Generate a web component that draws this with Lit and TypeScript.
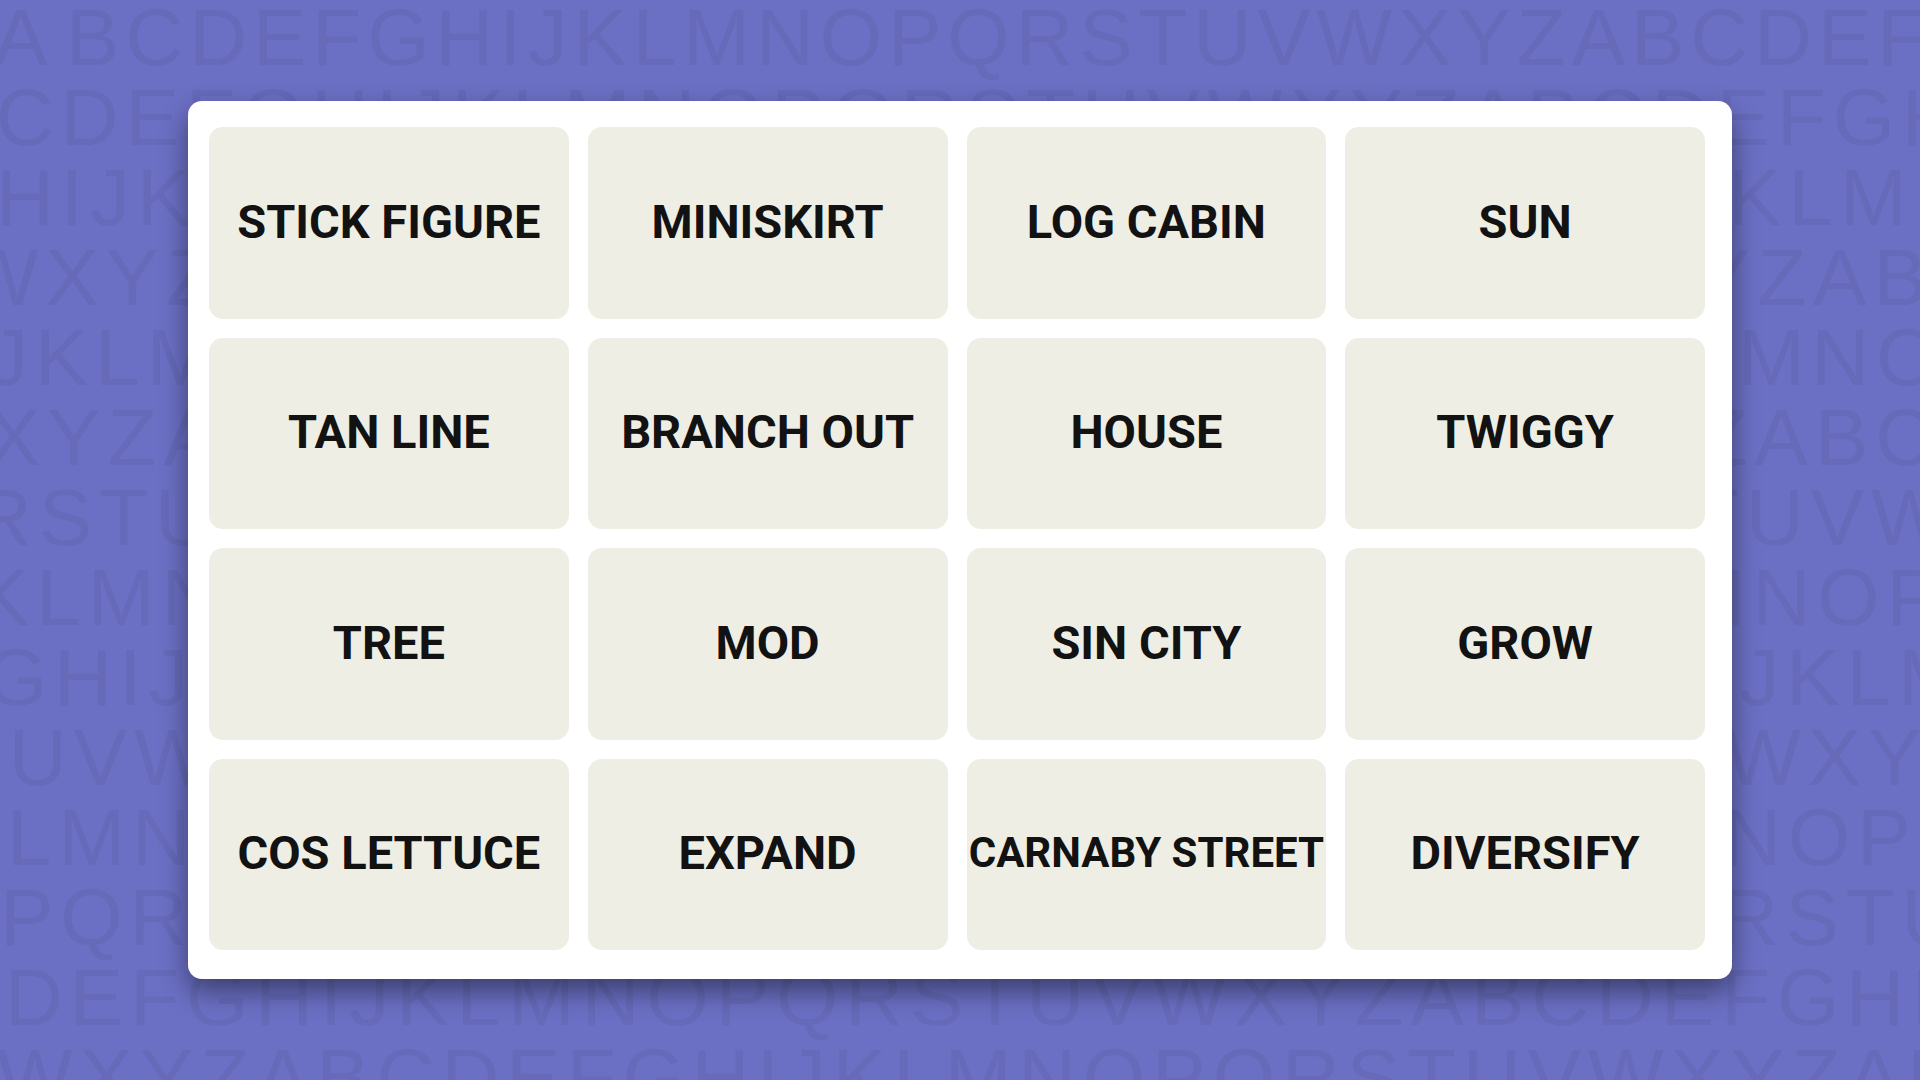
import { LitElement, html, css } from "lit";
import { customElement, state } from "lit/decorators.js";
import { classMap } from "lit/directives/class-map.js";
import { styleMap } from "lit/directives/style-map.js";

const ALPHABET = "ABCDEFGHIJKLMNOPQRSTUVWXYZ";

/** A line of the backdrop: its first letter and how far it starts from the left edge. */
interface Line {
  first: string;
  indent: number;
  tight?: boolean;
}

const LINES: Line[] = [
  { first: "A", indent: -6, tight: true },
  { first: "C", indent: -4 },
  { first: "H", indent: -4 },
  { first: "W", indent: -37 },
  { first: "J", indent: -12 },
  { first: "X", indent: -13 },
  { first: "R", indent: -26 },
  { first: "K", indent: -24 },
  { first: "G", indent: -15 },
  { first: "U", indent: 9 },
  { first: "L", indent: 7 },
  { first: "P", indent: 0 },
  { first: "D", indent: 5 },
  { first: "W", indent: -3 },
];

const WORDS = [
  "STICK FIGURE", "MINISKIRT", "LOG CABIN", "SUN",
  "TAN LINE", "BRANCH OUT", "HOUSE", "TWIGGY",
  "TREE", "MOD", "SIN CITY", "GROW",
  "COS LETTUCE", "EXPAND", "CARNABY STREET", "DIVERSIFY",
];

@customElement("letter-backdrop")
export class LetterBackdrop extends LitElement {
  static styles = css`
    :host {
      display: block;
      overflow: hidden;
      color: #666ab9;
      font-family: "Liberation Sans", Arial, sans-serif;
      font-size: 80px;
      line-height: 80px;
      user-select: none;
    }
    .line {
      white-space: nowrap;
      letter-spacing: 7px;
    }
    .tight {
      letter-spacing: 6px;
    }
  `;

  private text(line: Line) {
    const at = ALPHABET.indexOf(line.first);
    const run = ALPHABET.slice(at) + ALPHABET + ALPHABET;
    return line.tight ? run[0] + "\u200a" + run.slice(1) : run;
  }

  render() {
    return LINES.map(
      (line) => html`<div
        class=${classMap({ line: true, tight: !!line.tight })}
        style=${styleMap({ textIndent: `${line.indent}px` })}
      >${this.text(line)}</div>`
    );
  }
}

@customElement("app-root")
export class AppRoot extends LitElement {
  static styles = css`
    :host {
      display: block;
    }
    .page {
      position: relative;
      box-sizing: border-box;
      display: flex;
      min-height: 100vh;
      padding: 101px 188px;
      overflow: hidden;
      background: #6c70c5;
    }
    .backdrop {
      position: absolute;
      inset: -2px 0 0;
    }
    .board {
      position: relative;
      flex: 1;
      display: grid;
      grid-template-columns: repeat(4, minmax(0, 1fr));
      grid-auto-rows: 1fr;
      gap: 19px;
      padding: 26px 27px 29px 21px;
      border-radius: 14px;
      background: #ffffff;
      box-shadow: 0 12px 28px rgba(0, 0, 0, 0.45);
    }
    .tile {
      display: flex;
      align-items: center;
      justify-content: center;
      margin: 0;
      padding: 0 0 2px;
      border: 0;
      border-radius: 14px;
      background: #eeeee5;
      color: #121212;
      font-family: Roboto, "Liberation Sans", sans-serif;
      font-size: 47px;
      font-weight: 700;
      line-height: 56px;
      white-space: nowrap;
      cursor: pointer;
    }
    .long {
      font-size: 42px;
    }
    .tile[aria-pressed="true"] {
      background: #5a594e;
      color: #ffffff;
    }
  `;

  @state() private chosen: string[] = [];

  private toggle(word: string) {
    this.chosen = this.chosen.includes(word)
      ? this.chosen.filter((w) => w !== word)
      : [...this.chosen, word];
  }

  render() {
    return html`
      <main class="page">
        <letter-backdrop class="backdrop" aria-hidden="true"></letter-backdrop>
        <section class="board">
          ${WORDS.map(
            (word) => html`<button
              type="button"
              class=${classMap({ tile: true, long: word.length > 12 })}
              aria-pressed=${this.chosen.includes(word) ? "true" : "false"}
              @click=${() => this.toggle(word)}
            >${word}</button>`
          )}
        </section>
      </main>
    `;
  }
}
